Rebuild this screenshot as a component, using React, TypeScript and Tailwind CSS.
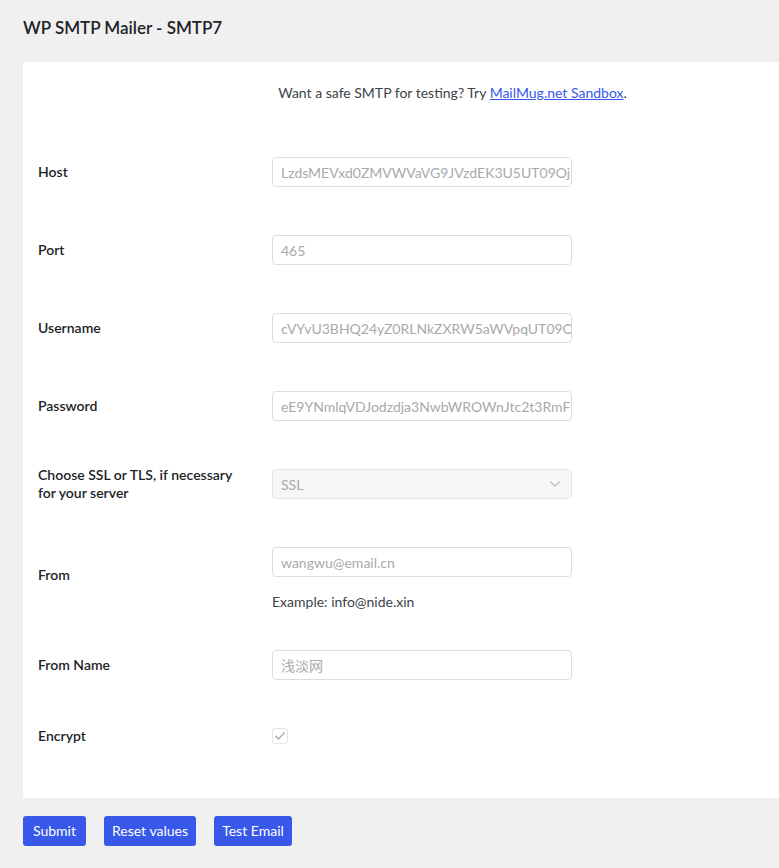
import React from "react";

const font = { fontFamily: '"Segoe UI", Lato, "Noto Sans CJK SC", sans-serif' };

const fields: { label: string; value: string }[] = [
  { label: "Host", value: "LzdsMEVxd0ZMVWVaVG9JVzdEK3U5UT09Ojp" },
  { label: "Port", value: "465" },
  { label: "Username", value: "cVYvU3BHQ24yZ0RLNkZXRW5aWVpqUT09Oj" },
  { label: "Password", value: "eE9YNmlqVDJodzdja3NwbWROWnJtc2t3RmF" },
];

const buttons: { text: string; width: string }[] = [
  { text: "Submit", width: "w-[63px]" },
  { text: "Reset values", width: "w-[92px]" },
  { text: "Test Email", width: "w-[78px]" },
];

function Row({ label, children, className = "py-6" }: { label: string; children: React.ReactNode; className?: string }) {
  return (
    <div className="flex items-center">
      <div className="w-[234px] shrink-0 pr-[20px] text-[14px] font-semibold leading-[18px] text-[#1d2327]">{label}</div>
      <div className={`flex flex-col justify-center ${className}`}>{children}</div>
    </div>
  );
}

function TextBox({ value }: { value: string }) {
  return (
    <div className="flex h-[30px] w-[300px] items-center overflow-hidden whitespace-nowrap rounded-[4px] border border-[#dcdcde] bg-white px-2 text-[14px] text-[#a7aaad]">
      {value}
    </div>
  );
}

export default function App() {
  return (
    <div className="h-[868px] w-[779px] overflow-hidden bg-[#f0f0f1] text-[#3c434a]" style={font}>
      <h1 className="pl-[23px] pt-[17px] text-[17px] font-semibold leading-[22px] text-[#1d2327]">WP SMTP Mailer - SMTP7</h1>
      <div className="ml-[23px] mt-[23px] w-[844px] bg-white pb-[30px] pl-[15px] pt-[21px]">
        <p className="mb-[30px] text-center text-[14px] leading-5">
          Want a safe SMTP for testing? Try{" "}
          <a href="#" className="text-[#3858e9] underline">
            MailMug.net Sandbox
          </a>
          .
        </p>
        {fields.map((f) => (
          <Row key={f.label} label={f.label}>
            <TextBox value={f.value} />
          </Row>
        ))}
        <Row label="Choose SSL or TLS, if necessary for your server" className="h-[78px]">
          <div className="flex h-[30px] w-[300px] items-center justify-between rounded-[4px] border border-[#e5e6e7] bg-[#f6f7f7] pl-2 pr-[10px] text-[14px] text-[#a7aaad]">
            <span>SSL</span>
            <svg width="12" height="8" viewBox="0 0 12 8" fill="none">
              <path d="M1 1.5l5 4.5 5-4.5" stroke="#c3c4c7" strokeWidth="1.6" />
            </svg>
          </div>
        </Row>
        <Row label="From" className="pb-[14px] pt-6">
          <TextBox value="wangwu@email.cn" />
          <p className="mt-[15px] text-[14px] leading-5 text-[#3c434a]">Example: info@nide.xin</p>
        </Row>
        <Row label="From Name">
          <TextBox value="浅淡网" />
        </Row>
        <Row label="Encrypt" className="h-16">
          <div className="flex h-4 w-4 items-center justify-center rounded-[3px] border border-[#e2e3e4] bg-white">
            <svg width="12" height="10" viewBox="0 0 12 10" fill="none">
              <path d="M1.5 5l3 3 6-6.5" stroke="#b4b6b8" strokeWidth="1.8" />
            </svg>
          </div>
        </Row>
      </div>
      <div className="ml-[23px] mt-[18px] flex gap-[18px]">
        {buttons.map((b) => (
          <button key={b.text} className={`h-[30px] rounded-[3px] bg-[#3858e9] text-center text-[14px] leading-[30px] text-white ${b.width}`}>
            {b.text}
          </button>
        ))}
      </div>
    </div>
  );
}
